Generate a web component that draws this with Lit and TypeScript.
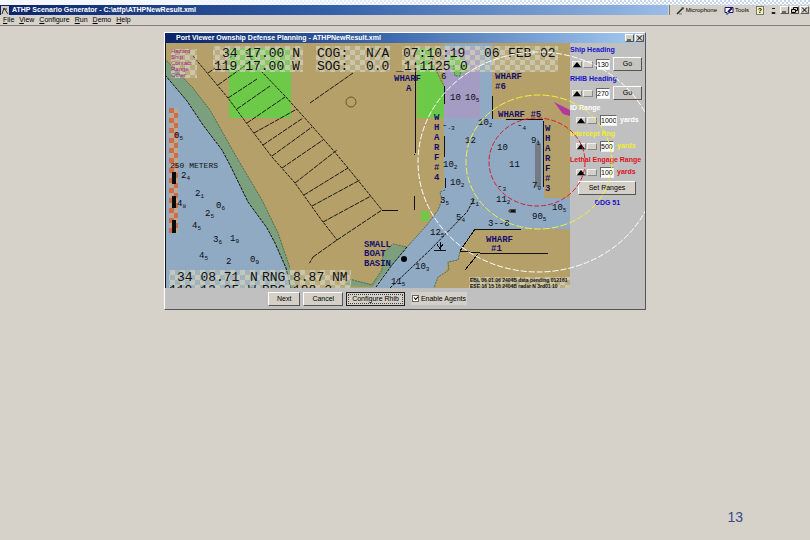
import { LitElement, html, svg, css } from "lit";
import { customElement } from "lit/decorators.js";

type Sounding = [number, number, string, string];
type Label = [number, number, string];
type Line = [number, number, number, number];

const SOUNDINGS: Sounding[] = [
  [174, 138, "0", "5"], [195, 196, "2", "1"], [177, 206, "4", "8"], [216, 208, "0", "6"],
  [205, 216, "2", "5"], [192, 228, "4", "5"], [213, 242, "3", "6"], [230, 241, "1", "9"],
  [199, 258, "4", "5"], [226, 264, "2", ""], [250, 262, "0", "9"], [181, 178, "2", "4"],
  [450, 100, "10", ""], [465, 100, "10", "5"], [478, 125, "10", "2"], [465, 143, "12", ""],
  [497, 150, "10", ""], [509, 167, "11", ""], [443, 167, "10", "2"], [531, 143, "9", "1"],
  [442, 128, "-", "-3"], [450, 185, "10", "2"], [496, 202, "11", "2"], [497, 189, "-", "3"],
  [532, 219, "90", "5"], [552, 210, "10", "5"], [532, 188, "7", "0"], [456, 220, "5", "4"],
  [430, 235, "12", "5"], [488, 226, "3--8", ""], [415, 269, "10", "3"], [391, 284, "11", "5"],
  [440, 203, "3", "5"], [470, 204, "1", "1"], [441, 79, "6", ""], [517, 128, "-", "4"],
];

const LABELS: Label[] = [
  [394, 81, "WHARF"], [406, 91, "A"], [495, 79, "WHARF"], [495, 89, "#6"], [498, 117, "WHARF #5"],
  [364, 247, "SMALL"], [364, 256, "BOAT"], [364, 266, "BASIN"], [486, 242, "WHARF"], [491, 251, "#1"],
  ...[..."WHARF#4"].map((c, i): Label => [434, 120 + i * 10, c]),
  ...[..."WHARF#3"].map((c, i): Label => [545, 131 + i * 10, c]),
];

const READOUTS: Label[] = [
  [222, 57, "34 17.00 N"], [214, 70, "119 17.00 W"],
  [317, 57, "COG:"], [366, 57, "N/A"], [317, 70, "SOG:"], [366, 70, "0.0"],
  [403, 57, "07:10:19"], [484, 57, "06"], [508, 57, "FEB"], [540, 57, "02"],
  [396, 70, "_1:1125"], [460, 70, "0"],
  [177, 281, "34 08.71"], [250, 281, "N"], [262, 281, "RNG"], [293, 281, "8.87 NM"],
  [169, 294, "119 12.25"], [248, 294, "W"], [262, 294, "BRG"], [293, 294, "188.2"],
];

const RUNGS: Line[] = [
  [208, 73, 232, 56], [218, 85, 246, 65], [228, 98, 257, 79], [237, 109, 270, 86], [247, 123, 285, 97],
  [254, 133, 297, 109], [263, 145, 303, 118], [272, 156, 312, 127], [282, 168, 323, 140],
  [295, 183, 337, 150], [304, 195, 348, 168], [312, 206, 360, 180], [323, 222, 371, 196],
  [337, 240, 382, 210], [310, 103, 353, 73], [313, 257, 337, 240],
];

@customElement("chart-map")
class ChartMap extends LitElement {
  static styles = css`
    :host { display: block; }
    svg { display: block; width: 100%; height: auto; }
    text { white-space: pre; font-family: "Liberation Mono", monospace; }
    .land { fill: #b5a06a; }
    .water { fill: #90aac3; }
    .shore { fill: #7c9f7d; }
    .park { fill: #6cca48; }
    .restricted { fill: #a59cc4; }
    .coast { fill: none; stroke: #111; stroke-dasharray: 3 1; }
    .edge { fill: none; stroke: #4e6b52; stroke-dasharray: 2 1; }
    .solid { fill: none; stroke: #111; shape-rendering: crispEdges; }
    .road { fill: none; stroke: #1c1a10; stroke-dasharray: 3 1; }
    .rung { stroke: #1c1a10; stroke-dasharray: 5 1; }
    .mark { fill: none; stroke: #6d5720; }
    .sounding { font-size: 9px; fill: #0c0c12; }
    .tenth { font-size: 6px; }
    .label { font-size: 9px; font-weight: bold; fill: #15106a; }
    .readout { font-size: 13px; fill: #111; }
    .legend { font: 6px "Liberation Sans", sans-serif; fill: #9c2a86; }
    .scale { font-size: 8px; fill: #111; }
    .source { font: bold 5px "Liberation Sans", sans-serif; fill: #111; }
  `;

  render() {
    return html`
      <svg viewBox="165 43 405 245" role="img" aria-label="Harbor chart">
        <defs>
          <pattern id="veil" width="10" height="10" patternUnits="userSpaceOnUse">
            <rect width="10" height="10" fill="#c9c8b0" fill-opacity="0.3" />
            <path d="M0 0h5v5h-5zM5 5h5v5h-5z" fill="#d2d2bd" fill-opacity="0.7" />
          </pattern>
          <pattern id="bar" width="10" height="10" x="169" y="108" patternUnits="userSpaceOnUse">
            <rect width="10" height="10" fill="#b9a79c" />
            <path d="M0 0h5v5h-5zM5 5h5v5h-5z" fill="#cc6f45" />
          </pattern>
        </defs>
        <rect class="land" x="165" y="43" width="405" height="245" />
        <path class="shore" d="M165 59L193 88L210 110L237 158L262 200L278 233L290 268L296 288H165z" />
        <path class="water" d="M165 75L187 101L203 125L222 150L230 165L248 202L267 228L275 243L286 268L291 288H165z" />
        <path class="edge" d="M165 59L193 88L210 110L237 158L262 200L278 233L290 268" />
        <path class="coast" d="M165 75L187 101L203 125L222 150L230 165L248 202L267 228L275 243L286 268L291 288" />
        <rect class="park" x="229" y="48" width="62" height="70" />
        <path class="road" d="M193 56L228 98L253 132L272 157L295 183L320 218L337 240" />
        <path class="road" d="M246 52L260 70L285 96L312 126L333 150L348 168L382 210" />
        <path class="solid" d="M382 210H398M416 62L415 155M414 196V210" />
        ${RUNGS.map(([a, b, c, d]) => svg`<line class="rung" x1=${a} y1=${b} x2=${c} y2=${d} />`)}
        <path class="road" d="M313 257L309 264" />

        <path class="water" d="M444 118V188L440 192L442 200L438 210L427 225L407 247L392 265L373 288H434L438 277L445 272L448 262L458 260L460 250L475 229H570V198H544V119H492V44H444z" />
        <rect class="restricted" x="444" y="48" width="36" height="70" />
        <path class="park" d="M417 48H437L430 60L444 86V118H417z" />
        <path class="park" d="M450 54L462 58L470 70L456 76L447 62z" />
        <rect class="park" x="421" y="211" width="8" height="10" />
        <path class="shore" d="M393 245L407 247L392 265L373 287L340 286L353 280L372 284L382 270L383 253z" />
        <path class="edge" d="M340 279L353 280L372 285L382 270L383 253L393 244L407 247M445 190L440 192L442 200L438 210L427 225L407 247M460 252L458 260L448 262L449 270L438 277L434 288M432 58L437 72L444 86M452 56L455 76L460 76L461 66" />
        <path class="coast" d="M407 247L392 265L376 287M390 288L430 250L467 212L474 199" />
        <path class="solid" d="M444 86V104M444 136V157M445 178V188M492 96V119M506 119H543M543 121V187M475 229H521M475 229L460 251L480 253H548M478 254L465 270M434 250H446M437 244L440 249L443 244M440 242V250" />
        <circle cx="404" cy="259" r="3" fill="#050505" />
        <circle class="mark" cx="351" cy="102" r="5" />
        <path d="M554 102L570 110V116L563 114z" fill="#b23a9c" />
        <path d="M538 138L539 142L541 144V187H535V144L537 142z" fill="#747b84" />
        <path d="M508 211l2-2h6v4h-6z" fill="#4c4c4c" />
        <path d="M511 210h4v2h-4z" fill="#111" />

        <rect x="169" y="108" width="9" height="125" fill="url(#bar)" />
        <path d="M172 172h4v12h-4zM172 196h4v12h-4zM172 220h4v13h-4z" fill="#0b0b0b" />
        <text class="scale" x="170" y="168">250 METERS</text>

        <rect x="171" y="49" width="26" height="29" fill="url(#veil)" />
        <rect x="213" y="46" width="90" height="26" fill="url(#veil)" />
        <rect x="316" y="46" width="74" height="26" fill="url(#veil)" />
        <rect x="402" y="46" width="156" height="26" fill="url(#veil)" />
        <rect x="169" y="270" width="182" height="18" fill="url(#veil)" />
        <rect x="469" y="277" width="101" height="11" fill="url(#veil)" />

        ${["Hazard", "Ship", "Contact", "Range", "Other"].map(
          (t, i) => svg`<text class="legend" x="171" y=${53 + i * 6}>${t}</text>`)}
        ${SOUNDINGS.map(([x, y, t, s]) => svg`<text class="sounding" x=${x} y=${y}>${t}<tspan class="tenth" dy="2">${s}</tspan></text>`)}
        ${LABELS.map(([x, y, t]) => svg`<text class="label" x=${x} y=${y}>${t}</text>`)}
        ${READOUTS.map(([x, y, t]) => svg`<text class="readout" x=${x} y=${y}>${t}</text>`)}
        <text class="source" x="470" y="282">EBL 06 01.06 2404B data pending 012161</text>
        <text class="source" x="470" y="288">ESE 16 15 16 2404B radar N 3rd01 10</text>
        <path class="solid" d="M165 43V288" />
      </svg>`;
  }
}

interface Setting {
  name: string;
  tone: string;
  value: string;
  unit?: string;
}

const SETTINGS: Setting[] = [
  { name: "Ship Heading", tone: "blue", value: "130" },
  { name: "RHIB Heading", tone: "blue", value: "270" },
  { name: "ID Range", tone: "white", value: "1000", unit: "yards" },
  { name: "Intercept Rng", tone: "yellow", value: "500", unit: "yards" },
  { name: "Lethal Engage Range", tone: "red", value: "100", unit: "yards" },
];

@customElement("range-panel")
class RangePanel extends LitElement {
  static styles = css`
    :host { display: block; background: #c0c0c0; font: 7px/10px "Liberation Sans", sans-serif; padding-top: 2px; }
    .group { display: grid; gap: 2px; margin-bottom: 3px; font-weight: bold; }
    .ranged { gap: 1px; }
    .name { white-space: nowrap; }
    .row { display: flex; align-items: center; gap: 1px; height: 14px; padding-left: 2px; }
    .ranged .row { height: 12px; padding-left: 6px; }
    button { font: inherit; font-weight: normal; padding: 0; background: #d4d0c8; color: #000; border: 1px solid; border-color: #fff #555 #555 #fff; }
    .step { width: 10px; height: 7px; display: grid; place-items: center; border-color: #eee #888 #888 #eee; }
    .step svg { display: block; }
    input { box-sizing: border-box; width: 14px; height: 11px; margin: 0 2px; padding: 0; border: 1px solid; border-color: #666 #eee #eee #666; background: #fff; font: 7px "Liberation Sans", sans-serif; }
    .wide { width: 17px; }
    .go { flex: none; width: 29px; height: 14px; background: #c6c4c0; }
    .set { display: block; width: 58px; height: 14px; margin: 2px 0 3px 8px; }
    .hull { margin: 0; text-align: center; font-weight: bold; }
    .blue { color: #1414c8; }
    .white { color: #fff; }
    .yellow { color: #f0ee28; }
    .red { color: #dc1422; }
  `;

  render() {
    return html`
      ${SETTINGS.map((s, i) => html`
        <div class="group ${s.tone} ${s.unit ? "ranged" : ""}">
          <label class="name" for="value-${i}">${s.name}</label>
          <div class="row">
            <button class="step" aria-label="Increase"><svg width="8" height="5"><path d="M0 5L4 0L8 5z" fill="#000" /></svg></button>
            <button class="step" aria-label="Decrease"></button>
            <input id="value-${i}" class=${s.value.length > 3 ? "wide" : ""} .value=${s.value} />
            ${s.unit ? html`<span>${s.unit}</span>` : html`<button class="go">Go</button>`}
          </div>
        </div>`)}
      <button class="set">Set Ranges</button>
      <p class="hull blue">DDG 51</p>`;
  }
}

@customElement("app-root")
class AppRoot extends LitElement {
  static styles = css`
    :host { display: flex; flex-direction: column; min-height: 100vh; background: #d6d2ca; color: #000; font: 7px/10px "Liberation Sans", sans-serif; }
    .desktop { height: 5px; background: linear-gradient(90deg, #f4f8fe, #f4f8fe 20%, transparent 80%), repeating-conic-gradient(#fff 0 25%, #c3d6f0 0 50%) 0 0 / 4px 4px; }
    .top { display: flex; height: 10px; background: #d4d0c8; }
    .title { flex: 1; display: flex; align-items: center; gap: 3px; padding-left: 1px; background: linear-gradient(90deg, #0a246a, #3560a8 50%, #9bbce6); color: #fff; font-weight: bold; }
    .title h1, .bar h2 { margin: 0; font: inherit; white-space: nowrap; }
    .tools { display: flex; align-items: center; gap: 7px; padding: 0 4px 0 6px; border-left: 1px solid #777; margin-left: 1px; }
    button { font: inherit; padding: 0; background: #d4d0c8; color: #000; border: 1px solid; border-color: #fff #555 #555 #fff; }
    .tool { display: flex; align-items: center; gap: 1px; border: 0; font-size: 6px; }
    .help { width: 8px; height: 9px; background: #f6f3b0; border-color: #777; font-weight: bold; line-height: 7px; }
    .win { box-sizing: border-box; width: 9px; height: 8px; display: grid; place-items: center; }
    .wins { display: flex; align-items: center; gap: 1px; padding-right: 1px; }
    nav { display: flex; gap: 5px; height: 10px; padding-left: 3px; border-bottom: 1px solid #808080; }
    nav a { color: #000; text-decoration: none; }
    nav a::first-letter { text-decoration: underline; }
    .dialog { position: relative; box-sizing: border-box; width: 100%; max-width: 482px; margin: 6px auto 0; border: 1px solid; border-color: #fff #555 #555 #fff; background: #c0c0c0; }
    .bar { display: flex; align-items: center; justify-content: space-between; height: 10px; padding-left: 11px; background: linear-gradient(90deg, #0a246a, #3a66ac 45%, #a6caf0); color: #fff; font-weight: bold; }
    .body { display: grid; grid-template-columns: 1fr 75px; position: relative; }
    .actions { display: flex; justify-content: center; align-items: center; gap: 3px; height: 21px; }
    .actions button { height: 14px; padding: 0 8px; }
    .actions .focus { padding: 0 5px; border-color: #222; outline: 1px dotted #444; outline-offset: -3px; }
    .agents { display: flex; align-items: center; gap: 2px; height: 13px; padding: 0 1px; margin-left: 3px; background: #d4d0c8; }
    .agents input { appearance: none; width: 7px; height: 7px; margin: 0; border: 1px solid #666; background: #fff; position: relative; }
    .agents input:checked::after { content: ""; position: absolute; left: 1px; top: 0; width: 3px; height: 2px; border: solid #000; border-width: 0 0 1px 1px; transform: rotate(-45deg); }
    .rings { position: absolute; inset: 0; width: 100%; height: 100%; pointer-events: none; }
    .ring { fill: none; }
    .page { margin: auto 67px 14px auto; font-size: 14px; line-height: 18px; color: #3a4a8c; }
  `;

  render() {
    return html`
      <div class="desktop"></div>
      <header class="top">
        <div class="title">
          <svg width="8" height="9" viewBox="0 0 8 9"><rect width="8" height="9" fill="#cfcabc" /><path d="M1 8L3 2L5 5L7 8M2 3h4" stroke="#333" fill="none" /></svg>
          <h1>ATHP Scenario Generator - C:\\atfp\\ATHPNewResult.xml</h1>
        </div>
        <div class="tools">
          <button class="tool"><svg width="9" height="9" viewBox="0 0 9 9"><path d="M1 8L6 3" stroke="#222" stroke-width="1.5" /><path d="M5 2l2-1 1 1-1 2z" fill="#444" /><path d="M3 8h3" stroke="#777" /></svg>Microphone</button>
          <button class="tool"><svg width="10" height="9" viewBox="0 0 10 9"><path d="M1 1.5H9V6.5H5L3 8.5V6.5H1z" fill="#fff" stroke="#14146e" /><path d="M4 6L8 2" stroke="#14146e" stroke-width="2" /></svg>Tools</button>
          <button class="help">?</button>
          <svg width="5" height="9" viewBox="0 0 5 9"><path d="M1 2.5h3M1 6.5h3v1H1z" stroke="#222" fill="none" /></svg>
        </div>
        <div class="wins">
          <button class="win" aria-label="Minimize"><svg width="7" height="6"><path d="M1 5h4" stroke="#000" /></svg></button>
          <button class="win" aria-label="Restore"><svg width="7" height="6"><path d="M2.5 2V.5h4v3H5M.5 2.5h4v3h-4z" stroke="#000" fill="none" /></svg></button>
          <button class="win" aria-label="Close"><svg width="7" height="6"><path d="M1 .5L6 5.5M6 .5L1 5.5" stroke="#000" /></svg></button>
        </div>
      </header>
      <nav>
        ${["File", "View", "Configure", "Run", "Demo", "Help"].map((m) => html`<a href="#">${m}</a>`)}
      </nav>
      <main class="dialog">
        <div class="bar">
          <h2>Port Viewer Ownship Defense Planning - ATHPNewResult.xml</h2>
          <div class="wins">
            <button class="win" aria-label="Minimize"><svg width="7" height="6"><path d="M1 5h4" stroke="#000" /></svg></button>
            <button class="win" aria-label="Close"><svg width="7" height="6"><path d="M1 .5L6 5.5M6 .5L1 5.5" stroke="#000" /></svg></button>
          </div>
        </div>
        <div class="body">
          <div>
            <chart-map></chart-map>
            <div class="actions">
              <button>Next</button>
              <button>Cancel</button>
              <button class="focus">Configure Rhib</button>
              <label class="agents"><input type="checkbox" checked />Enable Agents</label>
            </div>
          </div>
          <range-panel></range-panel>
          <svg class="rings" viewBox="165 43 480 266">
            <ellipse class="ring" cx="538" cy="162" rx="120" ry="110" stroke="#fff" stroke-dasharray="6 2" />
            <ellipse class="ring" cx="539" cy="162" rx="73" ry="67" stroke="#f2f03c" stroke-dasharray="7 2" />
            <ellipse class="ring" cx="537" cy="162" rx="48" ry="44" stroke="#dc1a2a" stroke-dasharray="5 2" />
          </svg>
        </div>
      </main>
      <footer class="page">13</footer>`;
  }
}
